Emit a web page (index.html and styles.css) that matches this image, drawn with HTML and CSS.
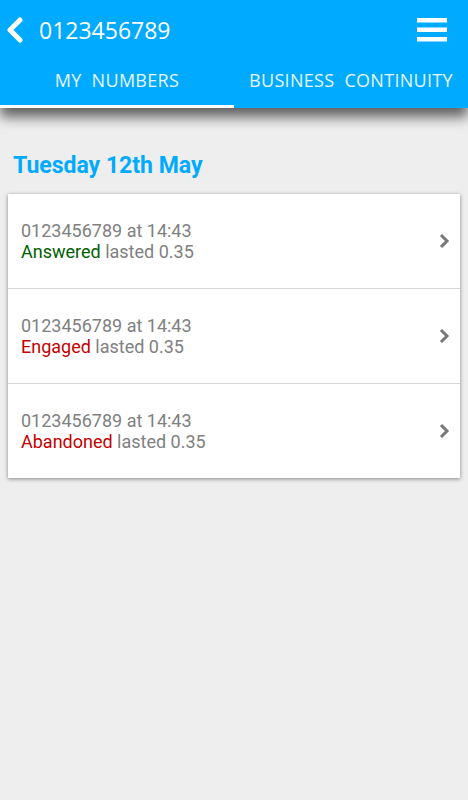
FILE: index.html
```html
<!DOCTYPE html>
<html lang="en">
<head>
    <meta charset="UTF-8">
    <meta name="viewport" content="width=device-width, initial-scale=1.0">
    <title>0123456789</title>
    <link rel="stylesheet" href="styles.css">
</head>
<body>

    <div class="header">
        <div class="topbar">
            <svg class="back" width="18" height="26" viewBox="0 0 18 26">
                <path d="M14 3 L4 13 L14 23" fill="none" stroke="#fff" stroke-width="5" stroke-linecap="round" stroke-linejoin="round"/>
            </svg>
            <span class="title">0123456789</span>
            <svg class="menu" width="30" height="24" viewBox="0 0 30 24">
                <rect x="0" y="0" width="30" height="4.5" fill="#fff"/>
                <rect x="0" y="9.5" width="30" height="4.5" fill="#fff"/>
                <rect x="0" y="19" width="30" height="4.5" fill="#fff"/>
            </svg>
        </div>
        <div class="tabs">
            <div class="tab active">MY&nbsp; NUMBERS</div>
            <div class="tab">BUSINESS&nbsp; CONTINUITY</div>
        </div>
    </div>

    <div class="content">
        <h2 class="day">Tuesday 12th May</h2>
        <div class="card">
            <div class="row">
                <div class="info">
                    <div>0123456789 at 14:43</div>
                    <div><span class="ok">Answered</span> lasted 0.35</div>
                </div>
                <svg class="arrow" width="12" height="16" viewBox="0 0 12 16">
                    <path d="M3 2 L9 8 L3 14" fill="none" stroke="#777" stroke-width="3"/>
                </svg>
            </div>
            <div class="row">
                <div class="info">
                    <div>0123456789 at 14:43</div>
                    <div><span class="bad">Engaged</span> lasted 0.35</div>
                </div>
                <svg class="arrow" width="12" height="16" viewBox="0 0 12 16">
                    <path d="M3 2 L9 8 L3 14" fill="none" stroke="#777" stroke-width="3"/>
                </svg>
            </div>
            <div class="row">
                <div class="info">
                    <div>0123456789 at 14:43</div>
                    <div><span class="bad">Abandoned</span> lasted 0.35</div>
                </div>
                <svg class="arrow" width="12" height="16" viewBox="0 0 12 16">
                    <path d="M3 2 L9 8 L3 14" fill="none" stroke="#777" stroke-width="3"/>
                </svg>
            </div>
        </div>
    </div>

</body>
</html>
```

FILE: styles.css
```css
body {
    margin: 0;
    background-color: #eeeeee;
    font-family: Roboto, "Liberation Sans", sans-serif;
    height: 800px;
}
.header {
    background-color: #00aaff;
    height: 108px;
    box-shadow: 0 9px 12px rgba(0, 0, 0, 0.6);
    position: relative;
    z-index: 2;
}
.topbar {
    height: 62px;
    display: flex;
    align-items: center;
    padding: 0 21px 0 6px;
    color: #fff;
}
.back {
    margin-right: 15px;
    margin-top: -2px;
}
.title {
    font-family: "Open Sans", sans-serif;
    font-size: 23px;
    flex: 1;
    margin-top: -2px;
}
.menu {
    margin-top: -2px;
}
.tabs {
    display: flex;
    height: 46px;
}
.tab {
    flex: 1;
    font-family: "Open Sans", sans-serif;
    font-size: 18px;
    letter-spacing: 0.3px;
    color: #e8f6ff;
    text-align: center;
    line-height: 36px;
    box-sizing: border-box;
}
.tab.active {
    border-bottom: 3px solid #fff;
}
.content {
    padding: 0 8px;
}
.day {
    margin: 0;
    padding: 43px 0 14px 5px;
    font-size: 23px;
    font-weight: bold;
    color: #00aaff;
    line-height: 29px;
}
.card {
    background-color: #fff;
    box-shadow: 0 1px 4px rgba(0, 0, 0, 0.45);
}
.row {
    display: flex;
    align-items: center;
    height: 94px;
    padding: 0 10px 0 13px;
    border-bottom: 1px solid #d6d6d6;
}
.row:last-child {
    border-bottom: none;
}
.info {
    flex: 1;
    font-size: 18px;
    line-height: 21px;
    color: #808080;
}
.ok {
    color: #005f00;
}
.bad {
    color: #c40000;
}
```
